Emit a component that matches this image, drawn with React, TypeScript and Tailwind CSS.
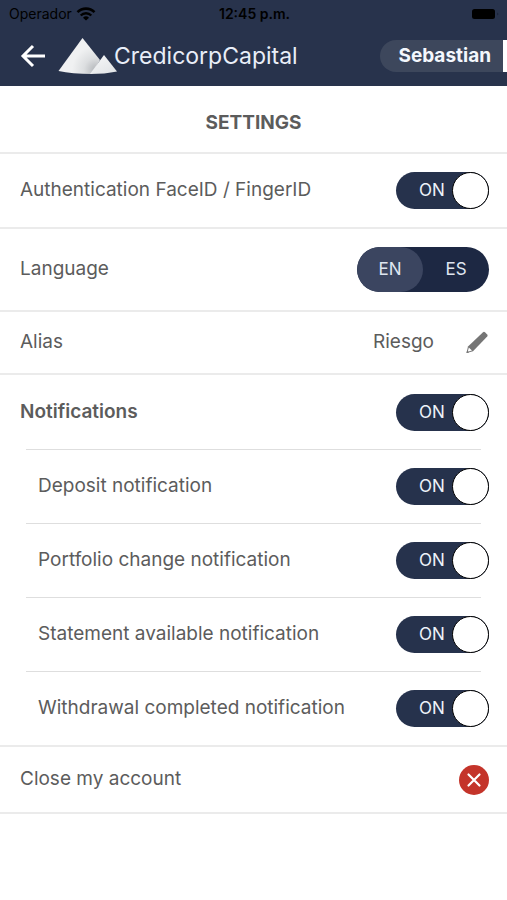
import { ReactNode, useState } from "react";

type ToggleProps = {
  id: string;
  checked: boolean;
  onChange: () => void;
};

// on / off switch
const Toggle = ({ id, checked, onChange }: ToggleProps) => (
  <label
    htmlFor={id}
    className={`flex h-[37px] w-[93px] shrink-0 cursor-pointer items-center rounded-full bg-[#26324c] text-[#eef2fa] ${
      checked ? "" : "flex-row-reverse"
    }`}
  >
    <input
      id={id}
      type="checkbox"
      className="sr-only"
      checked={checked}
      onChange={onChange}
    />
    <span className="flex-1 pl-4 text-center text-[17px] leading-none">
      {checked ? "ON" : "OFF"}
    </span>
    <span className="size-[37px] rounded-full border border-black bg-white" />
  </label>
);

const Row = ({
  className,
  children,
}: {
  className: string;
  children: ReactNode;
}) => (
  <div
    className={`flex items-center justify-between border-b-2 border-[#ebebeb] pr-[18px] pl-5 ${className}`}
  >
    {children}
  </div>
);

const StatusBar = () => (
  <div className="grid h-7 grid-cols-3 items-center pr-[7px] pl-[9px] text-sm text-black">
    <div className="flex items-center gap-1">
      <span>Operador</span>
      <svg viewBox="0 0 20 14" className="h-[14px] w-5" fill="none">
        <path d="M1.500 5.200a12 12 0 0 1 17 0" stroke="#000" strokeWidth="2.600" />
        <path d="M4.700 8.500a7.500 7.500 0 0 1 10.600 0" stroke="#000" strokeWidth="2.400" />
        <path d="M10 13.600 7 10.700a4.300 4.300 0 0 1 6 0z" fill="#000" />
      </svg>
    </div>
    <p className="text-center font-semibold">12:45 p.m.</p>
    <svg viewBox="0 0 29 12" className="h-3 w-[29px] justify-self-end">
      <rect x="1" y="1" width="23" height="10" rx="2.500" fill="#000" />
      <path d="M26.500 4.500a2 2 0 0 1 0 3z" fill="#10182a" />
    </svg>
  </div>
);

const Logo = () => (
  <svg viewBox="0 0 60 38" className="h-[38px] w-[60px]" aria-hidden="true">
    <defs>
      <radialGradient
        id="big"
        gradientUnits="userSpaceOnUse"
        cx="38"
        cy="33"
        r="24"
      >
        <stop offset="0" stopColor="#b2b5b9" />
        <stop offset="0.5" stopColor="#dcdee0" />
        <stop offset="1" stopColor="#f0f1f2" />
      </radialGradient>
      <linearGradient id="small" x1="0.2" y1="0" x2="1" y2="1">
        <stop offset="0" stopColor="#f6f7f8" />
        <stop offset="1" stopColor="#dfe2e5" />
      </linearGradient>
    </defs>
    <path d="M24.500 1 42 23 34 37Q14 37 0.500 34z" fill="url(#big)" />
    <path d="M46 18 59 34.500Q47 37 32 37z" fill="url(#small)" />
  </svg>
);

const NOTIFICATIONS = [
  { id: "deposit", label: "Deposit notification" },
  { id: "portfolio", label: "Portfolio change notification" },
  { id: "statement", label: "Statement available notification" },
  { id: "withdrawal", label: "Withdrawal completed notification" },
];

const App = () => {
  const [lang, setLang] = useState("EN");
  const [off, setOff] = useState<string[]>([]);

  const toggle = (id: string) =>
    setOff((prev) =>
      prev.includes(id) ? prev.filter((v) => v !== id) : [...prev, id]
    );

  return (
    <div className="min-h-screen bg-white font-['Inter','Liberation_Sans',sans-serif] text-[19px] text-[#5c5c5c]">
      <header className="bg-[#28334c]">
        <StatusBar />
        <div className="flex h-[58px] items-center justify-between pb-0.5">
          <div className="flex items-center">
            <button aria-label="Back" className="mr-3 ml-5 cursor-pointer">
              <svg
                viewBox="0 0 26 24"
                className="h-6 w-[26px]"
                fill="none"
                stroke="#fff"
                strokeWidth="3"
              >
                <path d="M13 2 3 12l10 10M3 12h22" />
              </svg>
            </button>
            <Logo />
            <span className="-ml-1 text-[23px] text-[#e9eef8]">
              CredicorpCapital
            </span>
          </div>
          <button className="h-8 cursor-pointer rounded-l-full border-r-4 border-white bg-[#3d475c] pr-3 pl-[18px] text-[19px] font-bold text-[#f4f7fd]">
            Sebastian
          </button>
        </div>
      </header>

      <main>
        <h1 className="flex h-[68px] items-center justify-center border-b-2 border-[#ebebeb] pt-2 font-bold">
          SETTINGS
        </h1>

        <Row className="h-[75px]">
          <label htmlFor="auth">Authentication FaceID / FingerID</label>
          <Toggle
            id="auth"
            checked={!off.includes("auth")}
            onChange={() => toggle("auth")}
          />
        </Row>

        {/* language */}
        <Row className="h-[83px]">
          <span id="language">Language</span>
          <div
            role="radiogroup"
            aria-labelledby="language"
            className="flex h-[45px] w-[132px] overflow-hidden rounded-full bg-[#1d2843] text-[17px] text-[#dfe5f0]"
          >
            {["EN", "ES"].map((v) => (
              <label
                key={v}
                className={`flex flex-1 cursor-pointer items-center justify-center rounded-full ${
                  lang === v ? "bg-[#3b4560]" : ""
                }`}
              >
                <input
                  type="radio"
                  name="lang"
                  className="sr-only"
                  checked={lang === v}
                  onChange={() => setLang(v)}
                />
                {v}
              </label>
            ))}
          </div>
        </Row>

        {/* alias */}
        <Row className="h-[63px]">
          <span>Alias</span>
          <div className="flex items-center gap-8">
            <span>Riesgo</span>
            <button aria-label="Edit alias" className="cursor-pointer">
              <svg viewBox="0 0 23 23" className="size-[23px]">
                <path
                  d="M0.500 22 2 15.500 17 1.200Q18 .4 19 1.300L21.200 3.500Q22.100 4.500 21.200 5.500L7 20.300z"
                  fill="#757575"
                />
                <path d="M1.800 20.700 2.800 16.500 6 19.600z" fill="#fff" />
                <path d="M0.500 22 1.100 19.300 3.200 21.400z" fill="#757575" />
              </svg>
            </button>
          </div>
        </Row>

        {/* notifications */}
        <section className="border-b-2 border-[#ebebeb]">
          <div className="flex h-[74px] items-center justify-between pr-[18px] pl-5">
            <label htmlFor="all" className="font-semibold">
              Notifications
            </label>
            <Toggle
              id="all"
              checked={!off.includes("all")}
              onChange={() => toggle("all")}
            />
          </div>
          <ul>
            {NOTIFICATIONS.map(({ id, label }) => (
              <li key={id}>
                <hr className="mx-[26px] border-[#dedede]" />
                <div className="flex h-[73px] items-center justify-between pr-[18px] pl-[38px]">
                  <label htmlFor={id}>{label}</label>
                  <Toggle
                    id={id}
                    checked={!off.includes(id)}
                    onChange={() => toggle(id)}
                  />
                </div>
              </li>
            ))}
          </ul>
        </section>

        <Row className="h-[67px]">
          <span id="close">Close my account</span>
          <button aria-labelledby="close" className="cursor-pointer">
            <svg viewBox="0 0 30 30" className="size-[30px]">
              <circle cx="15" cy="15" r="15" fill="#c4342a" />
              <path
                d="m9.500 9.500 11 11m0-11-11 11"
                stroke="#fff"
                strokeWidth="2.200"
                strokeLinecap="round"
              />
            </svg>
          </button>
        </Row>
      </main>
    </div>
  );
};

export default App;
